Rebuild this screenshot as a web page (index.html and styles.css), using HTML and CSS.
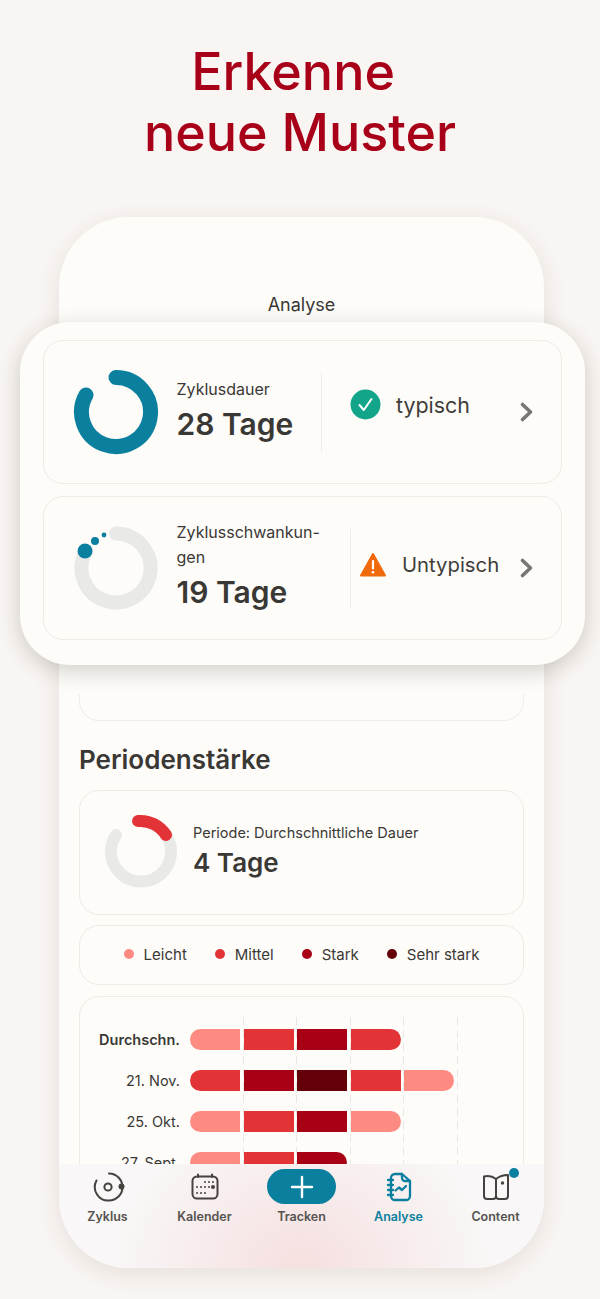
FILE: index.html
```html
<!DOCTYPE html>
<html lang="de">
<head>
    <meta charset="utf-8">
    <title>Erkenne neue Muster</title>
    <link rel="stylesheet" href="styles.css">
</head>
<body>
    <div class="page">
        <h1 class="headline">Erkenne&nbsp;<br>neue Muster</h1>

        <div class="phone">
            <div class="phone-title">Analyse</div>
            <div class="hidden-card"></div>

            <h2 class="section-title">Periodenstärke</h2>

            <div class="card period-card">
                <svg class="period-ring" width="74" height="74" viewBox="0 0 74 74">
                    <path class="ring-grey" d="M12 21 A30 30 0 1 0 62 21" />
                    <path class="ring-red" d="M34 7 A30 30 0 0 1 62 21" />
                </svg>
                <div>
                    <div class="period-label">Periode: Durchschnittliche Dauer</div>
                    <div class="period-value">4 Tage</div>
                </div>
            </div>

            <div class="card legend">
                <span class="legend-item"><i class="dot light"></i>Leicht</span>
                <span class="legend-item"><i class="dot medium"></i>Mittel</span>
                <span class="legend-item"><i class="dot heavy"></i>Stark</span>
                <span class="legend-item"><i class="dot very-heavy"></i>Sehr stark</span>
            </div>

            <div class="card chart">
                <div class="grid-lines">
                    <i></i><i></i><i></i><i></i><i></i>
                </div>
                <div class="chart-row">
                    <span class="chart-label bold">Durchschn.</span>
                    <div class="bar"><i class="light"></i><i class="medium"></i><i class="heavy"></i><i class="medium"></i></div>
                </div>
                <div class="chart-row">
                    <span class="chart-label">21. Nov.</span>
                    <div class="bar"><i class="medium"></i><i class="heavy"></i><i class="very-heavy"></i><i class="medium"></i><i class="light"></i></div>
                </div>
                <div class="chart-row">
                    <span class="chart-label">25. Okt.</span>
                    <div class="bar"><i class="light"></i><i class="medium"></i><i class="heavy"></i><i class="light"></i></div>
                </div>
                <div class="chart-row">
                    <span class="chart-label">27. Sept.</span>
                    <div class="bar"><i class="light"></i><i class="medium"></i><i class="heavy"></i></div>
                </div>
            </div>

            <nav class="tabbar">
                <div class="tab">
                    <svg width="34" height="34" viewBox="0 0 34 34" fill="none" stroke="#45423f" stroke-width="2" stroke-linecap="round">
                        <path d="M18 3.5 A13.5 13.5 0 0 1 18 30.5 A13.5 13.5 0 0 1 5.5 10.5" />
                        <circle cx="17" cy="17" r="3.6" />
                        <circle cx="30.5" cy="16.5" r="3" fill="#45423f" stroke="none" />
                    </svg>
                    <span>Zyklus</span>
                </div>
                <div class="tab">
                    <svg width="34" height="34" viewBox="0 0 34 34" fill="none" stroke="#45423f" stroke-width="2" stroke-linecap="round">
                        <rect x="4.5" y="6.5" width="25" height="22" rx="4.5" />
                        <path d="M10 4.5 V7 M24 4.5 V7" />
                        <g fill="#45423f" stroke="none">
                            <circle cx="17" cy="12" r="1" /><circle cx="21" cy="12" r="1" /><circle cx="25" cy="12" r="1" />
                            <circle cx="9" cy="17" r="1" /><circle cx="13" cy="17" r="1" /><circle cx="17" cy="17" r="1" /><circle cx="21" cy="17" r="1" /><circle cx="25" cy="17" r="2" />
                            <circle cx="9" cy="23" r="1" /><circle cx="13" cy="23" r="1" /><circle cx="17" cy="23" r="1" />
                        </g>
                    </svg>
                    <span>Kalender</span>
                </div>
                <div class="tab">
                    <div class="add-button">
                        <svg width="24" height="24" viewBox="0 0 24 24" fill="none" stroke="#ffffff" stroke-width="2.4" stroke-linecap="round">
                            <path d="M12 2 V22 M2 12 H22" />
                        </svg>
                    </div>
                    <span>Tracken</span>
                </div>
                <div class="tab active">
                    <svg width="34" height="34" viewBox="0 0 34 34" fill="none" stroke="#0a7f9e" stroke-width="2.3" stroke-linecap="round" stroke-linejoin="round">
                        <path d="M9 8 A4 4 0 0 1 13 4 H20 L28 11 V26 A4 4 0 0 1 24 30 H13 A4 4 0 0 1 9 26 Z" />
                        <path d="M20 4 V8 A3 3 0 0 0 23 11 H28" />
                        <path d="M6 10 H11 M6 15 H11 M6 20 H11 M6 25 H11" />
                        <path d="M13.5 20.5 L17 17.5 L20 20 L24 16" />
                    </svg>
                    <span>Analyse</span>
                </div>
                <div class="tab">
                    <svg width="34" height="34" viewBox="0 0 34 34" fill="none" stroke="#45423f" stroke-width="2" stroke-linejoin="round">
                        <path d="M17 9 C14 6.5 9 5.5 5 6.5 V26 A3 3 0 0 0 8 29 H14 A3 3 0 0 0 17 26 Z" />
                        <path d="M17 9 C20 6.5 25 5 29 5 V26 A3 3 0 0 1 26 29 H20 A3 3 0 0 1 17 26 Z" />
                        <circle cx="23.5" cy="13" r="1.7" fill="#45423f" stroke="none" />
                    </svg>
                    <i class="badge"></i>
                    <span>Content</span>
                </div>
            </nav>
        </div>

        <div class="overlay">
            <div class="card summary">
                <svg class="ring" width="86" height="86" viewBox="0 0 86 86">
                    <path class="ring-teal" d="M43 8.5 A34.5 34.5 0 1 1 13 26" />
                </svg>
                <div class="summary-text">
                    <div class="summary-label">Zyklusdauer</div>
                    <div class="summary-value">28 Tage</div>
                </div>
                <div class="status status-first">
                    <svg class="status-icon" width="31" height="31" viewBox="0 0 31 31">
                        <circle cx="15.5" cy="15.5" r="15" fill="#12a58a" />
                        <path d="M9.5 16 L13.8 21 L21.5 10" fill="none" stroke="#ffffff" stroke-width="2" stroke-linecap="round" stroke-linejoin="round" />
                    </svg>
                    <span class="status-text">typisch</span>
                </div>
                <svg class="chevron" width="16" height="24" viewBox="0 0 16 24">
                    <path d="M3.5 4.5 L11.5 12 L3.5 19.5" />
                </svg>
            </div>

            <div class="card summary">
                <svg class="ring" width="86" height="86" viewBox="0 0 86 86">
                    <path class="ring-grey-wide" d="M43 8.5 A34.5 34.5 0 1 1 13 26" />
                    <circle cx="12" cy="26" r="7.5" fill="#0a7f9e" />
                    <circle cx="22" cy="16" r="4" fill="#0a7f9e" />
                    <circle cx="31" cy="10" r="2.4" fill="#0a7f9e" />
                </svg>
                <div class="summary-text narrow">
                    <div class="summary-label">Zyklusschwankun-<br>gen</div>
                    <div class="summary-value">19 Tage</div>
                </div>
                <div class="status status-second">
                    <svg class="status-icon" width="28" height="26" viewBox="0 0 28 26">
                        <path d="M14 2 L26 23.5 H2 Z" fill="#f06a0c" stroke="#f06a0c" stroke-width="2" stroke-linejoin="round" />
                        <path d="M14 9 V16.5" stroke="#ffffff" stroke-width="2.2" stroke-linecap="round" />
                        <circle cx="14" cy="20.3" r="1.3" fill="#ffffff" />
                    </svg>
                    <span class="status-text">Untypisch</span>
                </div>
                <svg class="chevron" width="16" height="24" viewBox="0 0 16 24">
                    <path d="M3.5 4.5 L11.5 12 L3.5 19.5" />
                </svg>
            </div>
        </div>
    </div>
</body>
</html>
```

FILE: styles.css
```css
* {
    box-sizing: border-box;
}

body {
    margin: 0;
    background-color: #f9f5f2;
    font-family: Inter, "Noto Sans", sans-serif;
    color: #3a3835;
}

.page {
    position: relative;
    width: 600px;
    height: 1299px;
    overflow: hidden;
    padding-top: 41px;
}

.headline {
    margin: 0;
    text-align: center;
    font-size: 52px;
    font-weight: 500;
    line-height: 61px;
    color: #a80019;
}

.phone {
    position: relative;
    width: 485px;
    height: 1051px;
    margin: 54px 0 0 59px;
    padding: 0 20px;
    overflow: hidden;
    background-color: #fdfcf9;
    border-radius: 70px;
    box-shadow: 0 6px 24px rgba(60, 40, 30, 0.1);
}

.phone-title {
    padding-top: 77px;
    height: 102px;
    text-align: center;
    font-size: 18px;
    line-height: 22px;
}

.hidden-card {
    height: 27px;
    margin-top: 375px;
    border: 1px solid #efede9;
    border-top: none;
    border-radius: 0 0 20px 20px;
}

.section-title {
    margin: 23px 0 14px;
    font-size: 26px;
    font-weight: 600;
    line-height: 32px;
}

.card {
    background-color: #fdfcf9;
    border: 1px solid #ecebe6;
    border-radius: 20px;
}

.period-card {
    display: flex;
    align-items: center;
    gap: 15px;
    height: 125px;
    padding: 0 0 4px 24px;
    margin-bottom: 10px;
}

.period-label {
    font-size: 14.5px;
    line-height: 20px;
    margin-bottom: 4px;
}

.period-value {
    font-size: 26px;
    font-weight: 600;
    line-height: 32px;
}

.period-ring path,
.ring path {
    fill: none;
    stroke-linecap: round;
}

.ring-grey {
    stroke: #e9e9e8;
    stroke-width: 12;
}

.ring-red {
    stroke: #e23337;
    stroke-width: 12;
}

.ring-teal {
    stroke: #0a7f9e;
    stroke-width: 15;
}

.ring-grey-wide {
    stroke: #e9e9e8;
    stroke-width: 14;
}

.legend {
    display: flex;
    justify-content: center;
    align-items: center;
    gap: 28px;
    height: 60px;
    padding-bottom: 2px;
    margin-bottom: 11px;
    font-size: 15px;
}

.legend-item {
    display: flex;
    align-items: center;
    gap: 10px;
}

.dot {
    width: 10px;
    height: 10px;
    border-radius: 50%;
}

.light {
    background-color: #fd8b82;
}

.medium {
    background-color: #e23337;
}

.heavy {
    background-color: #a80014;
}

.very-heavy {
    background-color: #630008;
}

.chart {
    position: relative;
    height: 220px;
    padding-top: 32px;
}

.grid-lines {
    position: absolute;
    top: 20px;
    bottom: 0;
    left: 162.5px;
    display: flex;
    gap: 52.5px;
}

.grid-lines i {
    width: 1px;
    background: repeating-linear-gradient(to bottom, #e9e7e3 0 8px, transparent 8px 13px);
}

.chart-row {
    position: relative;
    display: flex;
    align-items: center;
    gap: 10px;
    height: 21px;
    margin-bottom: 20px;
}

.chart-label {
    width: 100px;
    text-align: right;
    font-size: 14.5px;
}

.chart-label.bold {
    font-weight: 600;
}

.bar {
    display: flex;
    gap: 3.5px;
    height: 21px;
    border-radius: 11px;
    overflow: hidden;
}

.bar i {
    width: 50px;
}

.tabbar {
    position: absolute;
    left: 0;
    right: 0;
    bottom: 0;
    height: 104px;
    display: grid;
    grid-template-columns: repeat(5, 97px);
    background: radial-gradient(ellipse 190px 160px at 50% 100%, #f6dfdf 0%, rgba(246, 223, 223, 0) 100%), #f9f7f7;
}

.tab {
    position: relative;
    display: flex;
    flex-direction: column;
    align-items: center;
    padding-top: 6px;
    font-size: 12.5px;
    font-weight: 600;
    color: #55524f;
}

.tab span {
    margin-top: 5px;
    line-height: 16px;
}

.tab.active {
    color: #0a7f9e;
}

.add-button {
    display: flex;
    align-items: center;
    justify-content: center;
    width: 69px;
    height: 35px;
    margin-top: -1px;
    background-color: #0a7f9e;
    border-radius: 18px;
}

.badge {
    position: absolute;
    top: 4px;
    left: 62px;
    width: 10px;
    height: 10px;
    border-radius: 50%;
    background-color: #0a7f9e;
}

.overlay {
    position: absolute;
    left: 20px;
    top: 322px;
    width: 565px;
    height: 343px;
    display: flex;
    flex-direction: column;
    gap: 12px;
    padding: 18px 23px 0 23px;
    background-color: #fdfcf9;
    border-radius: 50px;
    box-shadow: 0 6px 22px rgba(40, 30, 20, 0.2);
}

.summary {
    display: flex;
    align-items: center;
    height: 144px;
    padding: 0 26px 0 29px;
}

.ring {
    flex: none;
    margin-right: 17.5px;
}

.summary-text {
    width: 144.5px;
    flex: none;
    padding-bottom: 4px;
}

.summary-text.narrow {
    width: 173.5px;
}

.summary-label {
    font-size: 16px;
    line-height: 25px;
}

.summary-value {
    margin-top: 2px;
    font-size: 30px;
    font-weight: 600;
    line-height: 40px;
}

.status {
    display: flex;
    align-items: center;
    align-self: stretch;
    flex: 1;
    margin: 32px 0 31px;
    border-left: 1px solid #eeece8;
}

.status-first {
    gap: 15px;
    padding: 0 0 16px 28px;
}

.status-second {
    gap: 15px;
    padding: 0 0 8px 8px;
}

.status-text {
    font-size: 21.4px;
    color: #3f3d3a;
}

.status-second .status-text {
    font-size: 20.3px;
}

.chevron path {
    fill: none;
    stroke: #777674;
    stroke-width: 3.6;
    stroke-linecap: round;
    stroke-linejoin: round;
}
```
